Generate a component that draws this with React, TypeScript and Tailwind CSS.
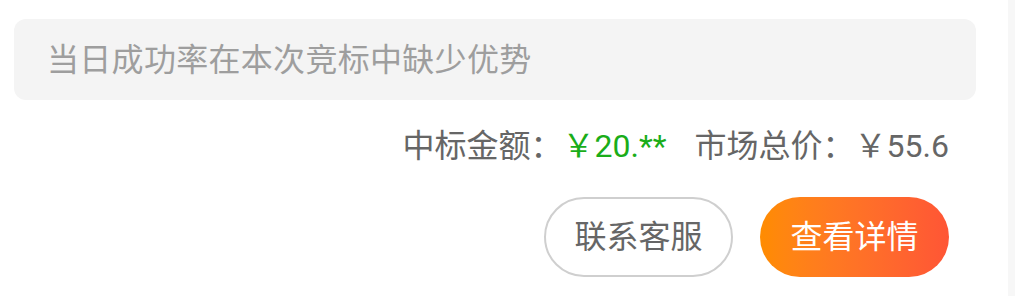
export default function App() {
  return (
    <div className="flex w-[1015px] h-[296px] bg-white font-[Roboto,'Noto_Sans_CJK_SC',sans-serif]">
      <div className="w-[1008px] pl-[14px] pt-[19px]">
        {/* status tip */}
        <div className="flex items-center w-[962px] h-[81px] rounded-[12px] bg-[#f4f4f4] pl-[33px] text-[32px] leading-none tracking-[0.3px] text-[#9e9e9e]">
          当日成功率在本次竞标中缺少优势
        </div>

        {/* prices */}
        <div className="flex justify-end items-center mt-[24px] pr-[59px] h-[44px] text-[32px] leading-none text-[#666666]">
          <span>中标金额：</span>
          <span className="text-[#1aad19]">￥20.**</span>
          <span className="ml-[28px]">市场总价：</span>
          <span>￥55.6</span>
        </div>

        {/* actions */}
        <div className="flex justify-end gap-[27px] mt-[29px] pr-[59px]">
          <button className="flex items-center justify-center w-[189px] h-[80px] rounded-full border-2 border-[#cfcfcf] bg-white text-[32px] text-[#666666]">
            联系客服
          </button>
          <button className="flex items-center justify-center w-[189px] h-[80px] rounded-full bg-linear-to-r from-[#ff8c00] to-[#ff5535] text-[32px] text-white">
            查看详情
          </button>
        </div>
      </div>
      <div className="w-[7px] bg-[#f7f7f7]" />
    </div>
  );
}
